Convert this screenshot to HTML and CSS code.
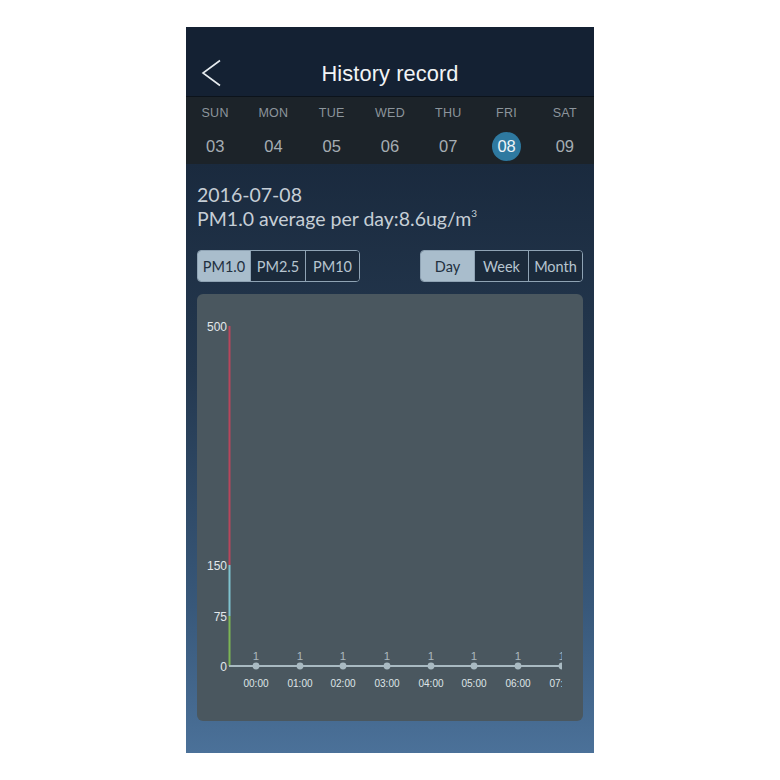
FILE: index.html
```html
<!DOCTYPE html>
<html>
<head>
<meta charset="utf-8">
<link rel="stylesheet" href="styles.css">
</head>
<body>
<div class="phone">
  <header class="nav">
    <svg class="back" width="24" height="30" viewBox="0 0 24 30"><polyline points="20,1.5 3,14 20,26.5" fill="none" stroke="#e6ebef" stroke-width="1.6"/></svg>
    <div class="title">History record</div>
  </header>
  <div class="week">
    <div class="day"><span class="dn">SUN</span><span class="dd">03</span></div>
    <div class="day"><span class="dn">MON</span><span class="dd">04</span></div>
    <div class="day"><span class="dn">TUE</span><span class="dd">05</span></div>
    <div class="day"><span class="dn">WED</span><span class="dd">06</span></div>
    <div class="day"><span class="dn">THU</span><span class="dd">07</span></div>
    <div class="day"><span class="dn">FRI</span><span class="dd sel">08</span></div>
    <div class="day"><span class="dn">SAT</span><span class="dd">09</span></div>
  </div>
  <main class="content">
    <div class="info">
      <div>2016-07-08</div>
      <div>PM1.0 average per day:8.6ug/m<sup>3</sup></div>
    </div>
    <div class="controls">
      <div class="seg">
        <div class="opt on w52">PM1.0</div>
        <div class="opt w54">PM2.5</div>
        <div class="opt w53">PM10</div>
      </div>
      <div class="seg">
        <div class="opt on w53">Day</div>
        <div class="opt w53">Week</div>
        <div class="opt w53">Month</div>
      </div>
    </div>
    <div class="card">
      <svg class="chart" width="386" height="427" viewBox="0 0 386 427">
        <defs><clipPath id="c"><rect x="0" y="0" width="365" height="427"/></clipPath></defs>
        <line x1="32.5" y1="32" x2="32.5" y2="271" stroke="#b8465c" stroke-width="2"/>
        <line x1="32.5" y1="271" x2="32.5" y2="322" stroke="#7fc3cf" stroke-width="2"/>
        <line x1="32.5" y1="322" x2="32.5" y2="372" stroke="#7cb655" stroke-width="2"/>
        <g class="ylab">
          <text x="30" y="36.5">500</text>
          <text x="30" y="275.5">150</text>
          <text x="30" y="326.5">75</text>
          <text x="30" y="376.5">0</text>
        </g>
        <g clip-path="url(#c)">
          <line x1="32" y1="372" x2="364" y2="372" stroke="#a9bac2" stroke-width="2"/>
          <g fill="#a9bac2">
            <circle cx="59" cy="372" r="3.4"/><circle cx="103" cy="372" r="3.4"/><circle cx="146" cy="372" r="3.4"/><circle cx="190" cy="372" r="3.4"/><circle cx="234" cy="372" r="3.4"/><circle cx="277" cy="372" r="3.4"/><circle cx="321" cy="372" r="3.4"/><circle cx="365" cy="372" r="3.4"/>
          </g>
          <g class="vlab">
            <text x="59" y="366">1</text><text x="103" y="366">1</text><text x="146" y="366">1</text><text x="190" y="366">1</text><text x="234" y="366">1</text><text x="277" y="366">1</text><text x="321" y="366">1</text><text x="365" y="366">1</text>
          </g>
          <g class="xlab">
            <text x="59" y="393">00:00</text><text x="103" y="393">01:00</text><text x="146" y="393">02:00</text><text x="190" y="393">03:00</text><text x="234" y="393">04:00</text><text x="277" y="393">05:00</text><text x="321" y="393">06:00</text><text x="365" y="393">07:00</text>
          </g>
        </g>
      </svg>
    </div>
  </main>
</div>
</body>
</html>
```
FILE: styles.css
```css
html, body { margin: 0; padding: 0; background: #ffffff; }
.phone {
  margin: 27px 0 0 186px;
  width: 408px;
  height: 726px;
  display: flex;
  flex-direction: column;
  overflow: hidden;
  font-family: "Liberation Sans", Arial, sans-serif;
}
.nav {
  height: 45px;
  padding-top: 24px;
  background: #142133;
  display: flex;
  align-items: center;
  justify-content: center;
  position: relative;
  border-bottom: 1px solid #0c131b;
}
.back { position: absolute; top: 32px; left: 14px; }
.title { color: #f1f4f6; font-size: 21.8px; letter-spacing: 0.1px; }
.week {
  height: 67px;
  background: #1c2329;
  display: grid;
  grid-template-columns: repeat(7, 1fr);
}
.day { display: flex; flex-direction: column; align-items: center; }
.dn { margin-top: 9px; height: 14px; line-height: 14px; font-size: 12.5px; color: #8c959c; letter-spacing: 0.3px; }
.dd {
  margin-top: 12px;
  width: 29px; height: 29px; line-height: 29px;
  border-radius: 50%;
  text-align: center;
  font-size: 16.5px;
  color: #a5adb3;
}
.dd.sel { background: #2e79a0; color: #eef4f8; }
.content {
  flex: 1;
  background: linear-gradient(to bottom, #1a2a3e 0%, #24384f 35%, #38587a 75%, #4b7199 100%);
  padding: 19px 11px 0 11px;
  display: flex;
  flex-direction: column;
}
.info {
  font-family: Lato, "Liberation Sans", sans-serif;
  color: #c6ced6;
  font-size: 19.5px;
  line-height: 24px;
}
.info sup { font-size: 10px; vertical-align: 9px; line-height: 0; }
.controls {
  margin-top: 19px;
  display: flex;
  justify-content: space-between;
}
.seg {
  display: flex;
  border: 1px solid #8fa3b4;
  border-radius: 4px;
  overflow: hidden;
  height: 30px;
}
.opt {
  font-family: Lato, "Liberation Sans", sans-serif;
  font-size: 14.5px;
  color: #b7c5d0;
  background: #1b2a3b;
  display: flex;
  align-items: center;
  justify-content: center;
  border-left: 1px solid #8fa3b4;
}
.opt:first-child { border-left: none; }
.opt.on { background: #a9bdcc; color: #223040; }
.w52 { width: 52px; }
.w53 { width: 53px; }
.w54 { width: 54px; }
.card {
  margin-top: 12px;
  width: 386px;
  height: 427px;
  background: #4a575f;
  border-radius: 6px;
  overflow: hidden;
}
.chart { display: block; }
.ylab text { font-size: 12px; fill: #e3e8eb; text-anchor: end; font-family: "Liberation Sans", Arial, sans-serif; }
.vlab text { font-size: 11.5px; fill: #aab7bd; text-anchor: middle; font-family: "Liberation Sans", Arial, sans-serif; }
.xlab text { font-size: 10px; fill: #dfe5e8; text-anchor: middle; font-family: "Liberation Sans", Arial, sans-serif; }
```
